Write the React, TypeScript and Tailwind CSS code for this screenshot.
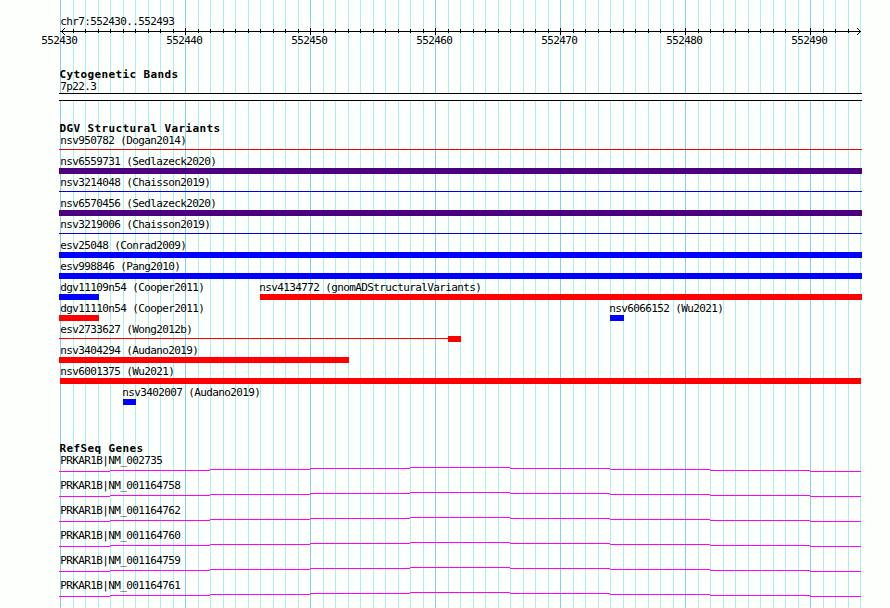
type Feature = { name: string, start: number, end: number, color?: string, thin?: boolean, thinUntil?: number, labelShift?: number }

const PURPLE = 'bg-[#4b0082]'
const BLUE = 'bg-[#0000ff]'
const RED = 'bg-[#ff0000]'

const mono = "font-['DejaVu_Sans_Mono','Liberation_Mono',monospace]"

// start and end are pixels on the panel, one row per array
const variants: Feature[][] = [
    [{ name: 'nsv950782 (Dogan2014)', start: 59, end: 862, color: 'bg-[#ee0000]', thin: true, labelShift: 1 }],
    [{ name: 'nsv6559731 (Sedlazeck2020)', start: 59, end: 862, color: PURPLE, labelShift: 1 }],
    [{ name: 'nsv3214048 (Chaisson2019)', start: 59, end: 862, color: 'bg-[#0000e6]', thin: true, labelShift: 1 }],
    [{ name: 'nsv6570456 (Sedlazeck2020)', start: 59, end: 862, color: PURPLE, labelShift: 1 }],
    [{ name: 'nsv3219006 (Chaisson2019)', start: 59, end: 862, color: 'bg-[#0000e6]', thin: true, labelShift: 1 }],
    [{ name: 'esv25048 (Conrad2009)', start: 59, end: 862, color: BLUE, labelShift: 1 }],
    [{ name: 'esv998846 (Pang2010)', start: 59, end: 862, color: BLUE, labelShift: 1 }],
    [
        { name: 'dgv11109n54 (Cooper2011)', start: 59, end: 99, color: BLUE, labelShift: 1 },
        { name: 'nsv4134772 (gnomADStructuralVariants)', start: 260, end: 862, color: RED, labelShift: -1 },
    ],
    [
        { name: 'dgv11110n54 (Cooper2011)', start: 59, end: 99, color: RED, labelShift: 1 },
        { name: 'nsv6066152 (Wu2021)', start: 610, end: 624, color: BLUE, labelShift: -1 },
    ],
    [{ name: 'esv2733627 (Wong2012b)', start: 59, end: 461, color: RED, thinUntil: 448, labelShift: 1 }],
    [{ name: 'nsv3404294 (Audano2019)', start: 59, end: 349, color: RED, labelShift: 1 }],
    [{ name: 'nsv6001375 (Wu2021)', start: 60, end: 861, color: RED }],
    [{ name: 'nsv3402007 (Audano2019)', start: 123, end: 136, color: BLUE, labelShift: -1 }],
]

const genes = [
    'PRKAR1B|NM_002735',
    'PRKAR1B|NM_001164758',
    'PRKAR1B|NM_001164762',
    'PRKAR1B|NM_001164760',
    'PRKAR1B|NM_001164759',
    'PRKAR1B|NM_001164761',
]

// intron line, width and drop of every step
const steps = [[51, 4], [100, 3], [100, 2], [100, 1], [100, 0], [100, 1], [100, 2], [100, 3], [51, 4]]

const bases = Array.from({ length: 65 }, (_, i) => i)
const positions = ['552430', '552440', '552450', '552460', '552470', '552480', '552490']

function Label({ children }: { children: string }) {
    return <span className="block h-[12px] mt-[2px] pl-[0.3px] text-[11px] leading-[12px] tracking-[-0.622px] whitespace-pre">{children}</span>
}

function Title({ children }: { children: string }) {
    return <h2 className="pl-[59.5px] h-[12px] text-[11px] leading-[12px] tracking-[0.377px] font-bold whitespace-pre">{children}</h2>
}

function Grid() {
    return (
        <div className="absolute inset-0 flex pl-[60px]">
            {bases.map(i => (
                <div key={i} className={`shrink-0 border-l ${i % 2 ? 'w-[12px]' : 'w-[13px]'} ${i % 10 ? 'border-[#afeeee]' : 'border-[#87ceeb]'}`} />
            ))}
        </div>
    )
}

function Ruler() {
    return (
        <div className="h-[20px]">
            <svg className="block" width="890" height="9" shapeRendering="crispEdges" stroke="#000" fill="none">
                <path d="M60 4.5H861" />
                {bases.map(i => {
                    const x = 60.5 + Math.ceil(i * 12.5)
                    return i === 0 || i === 64 ? null : <path key={i} d={i % 10 ? `M${x} 2V6` : `M${x} 1V8`} />
                })}
                <path d="M61 4.5h1M62 3.5h1M63 2.5h1M64 1.5h1M62 5.5h1M63 6.5h1M64 7.5h1" />
                <path d="M860 4.5h1M859 3.5h1M858 2.5h1M857 1.5h1M859 5.5h1M858 6.5h1M857 7.5h1" />
            </svg>
            <div className="flex -mt-[3px] pl-[41px]">
                {positions.map(p => <div key={p} className="w-[125px] shrink-0"><Label>{p}</Label></div>)}
            </div>
        </div>
    )
}

function Bar({ feature }: { feature: Feature }) {
    if (feature.thin) return <div className="h-[6px] pt-[2px]"><div className={`h-px ${feature.color}`} /></div>
    if (feature.thinUntil) {
        return (
            <div className="flex h-[6px] items-start">
                <div className={`h-px mt-[2px] ${feature.color}`} style={{ width: feature.thinUntil - feature.start }} />
                <div className={`h-[6px] grow ${feature.color}`} />
            </div>
        )
    }
    return <div className={`h-[6px] ${feature.color}`} />
}

function VariantRow({ features }: { features: Feature[] }) {
    return (
        <div className="flex h-[21px]">
            {features.map((f, i) => (
                <div key={f.name} className="shrink-0 flex flex-col" style={{ marginLeft: f.start - (i ? features[i - 1].end : 0), width: f.end - f.start }}>
                    <div style={{ marginLeft: f.labelShift ?? 0 }}><Label>{f.name}</Label></div>
                    <Bar feature={f} />
                </div>
            ))}
        </div>
    )
}

function Gene({ name }: { name: string }) {
    return (
        <div className="flex flex-col h-[25px]">
            <div className="pl-[60px]"><Label>{name}</Label></div>
            <div className="flex items-start pl-[59px]">
                {steps.map(([width, drop], i) => (
                    <div key={i} className="h-px bg-[#ff00ff] shrink-0" style={{ width, marginTop: drop }} />
                ))}
            </div>
        </div>
    )
}

export default function App() {
    return (
        <div className={`${mono} relative w-[890px] h-[608px] overflow-hidden bg-[#fdfffc] text-black`}>
            <Grid />
            <div className="relative flex flex-col">
                <div className="pt-[14px] pl-[60px] h-[27px]"><Label>chr7:552430..552493</Label></div>
                <Ruler />
                <section className="flex flex-col pt-[22px]">
                    <Title>Cytogenetic Bands</Title>
                    <div className="flex pl-[60px] -mt-[2px]"><Label>7p22.3</Label></div>
                    <div className="ml-[59px] w-[803px] h-[8px] border-y border-black bg-[#fdfffc]" />
                </section>
                <section className="flex flex-col pt-[22px]">
                    <Title>DGV Structural Variants</Title>
                    <div className="-mt-[2px]">
                        {variants.map(row => <VariantRow key={row[0].name} features={row} />)}
                    </div>
                </section>
                <section className="flex flex-col pt-[37px]">
                    <Title>RefSeq Genes</Title>
                    <div className="-mt-[2px]">
                        {genes.map(g => <Gene key={g} name={g} />)}
                    </div>
                </section>
            </div>
        </div>
    )
}
